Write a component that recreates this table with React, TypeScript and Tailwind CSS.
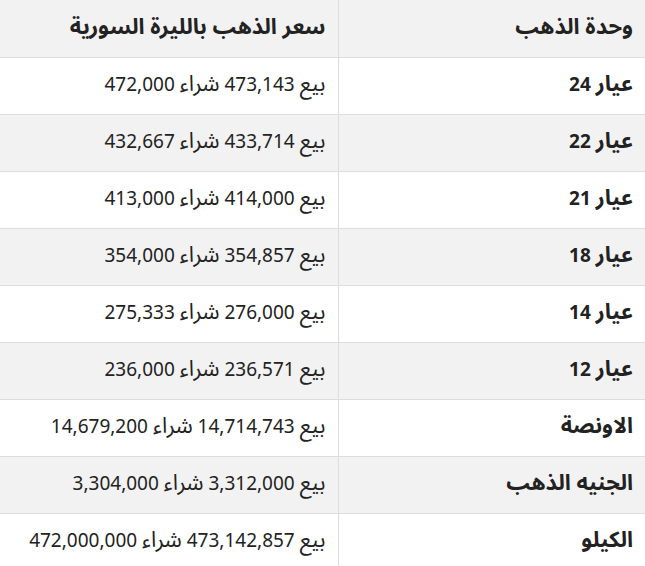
import React from "react";

interface GoldRow {
  unit: string;
  num?: string;
  sell: string;
  buy: string;
}

const rows: GoldRow[] = [
  { unit: "عيار", num: "24", sell: "473,143", buy: "472,000" },
  { unit: "عيار", num: "22", sell: "433,714", buy: "432,667" },
  { unit: "عيار", num: "21", sell: "414,000", buy: "413,000" },
  { unit: "عيار", num: "18", sell: "354,857", buy: "354,000" },
  { unit: "عيار", num: "14", sell: "276,000", buy: "275,333" },
  { unit: "عيار", num: "12", sell: "236,571", buy: "236,000" },
  { unit: "الاونصة", sell: "14,714,743", buy: "14,679,200" },
  { unit: "الجنيه الذهب", sell: "3,312,000", buy: "3,304,000" },
  { unit: "الكيلو", sell: "473,142,857", buy: "472,000,000" },
];

// Arabic words render a bit larger than the Latin digits in the reference
const Ar: React.FC<{ children: React.ReactNode }> = ({ children }) => (
  <span className="text-[22px]">{children}</span>
);

export default function App() {
  return (
    <div
      dir="rtl"
      className="w-[645px] bg-white text-[#222] font-['Noto_Sans','Noto_Sans_Arabic','DejaVu_Sans',sans-serif] text-[19px] leading-6"
    >
      <table className="w-full border-collapse table-fixed">
        <thead>
          <tr className="bg-[#f2f2f2]">
            <th className="w-[307px] h-[57px] px-3 pb-[5px] text-right font-bold border-b border-[#dddddd]">
              <Ar>وحدة الذهب</Ar>
            </th>
            <th className="h-[57px] px-3 pb-[5px] text-right font-bold border-b border-r border-[#dddddd]">
              <Ar>سعر الذهب بالليرة السورية</Ar>
            </th>
          </tr>
        </thead>
        <tbody>
          {rows.map((row, i) => (
            <tr key={i} className={i % 2 === 1 ? "bg-[#f2f2f2]" : "bg-white"}>
              <td className="h-[57px] px-3 pb-[5px] text-right font-bold border-b border-[#dddddd]">
                <Ar>{row.unit}</Ar>
                {row.num && <> {row.num}</>}
              </td>
              <td className="h-[57px] px-3 pb-[5px] text-right border-b border-r border-[#dddddd]">
                <Ar>بيع</Ar> {row.sell} <Ar>شراء</Ar> {row.buy}
              </td>
            </tr>
          ))}
        </tbody>
      </table>
    </div>
  );
}
